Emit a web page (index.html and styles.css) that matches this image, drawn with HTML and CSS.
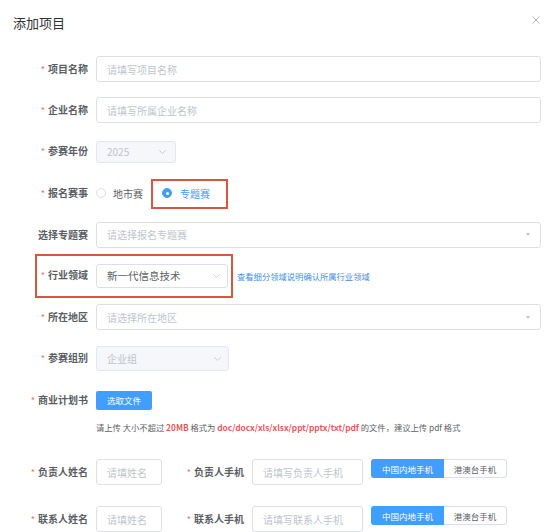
FILE: index.html
```html
<!DOCTYPE html>
<html lang="zh">
<head>
<meta charset="utf-8">
<title>添加项目</title>
<link rel="stylesheet" href="styles.css">
</head>
<body>
<div class="dialog">
  <div class="header">
    <span class="title">添加项目</span>
    <span class="close"><svg width="8" height="8" viewBox="0 0 8 8"><path d="M0.5 0.5L7.5 7.5M7.5 0.5L0.5 7.5" stroke="#a8abb2" stroke-width="0.9" fill="none"/></svg></span>
  </div>
  <div class="form">
    <div class="item">
      <div class="label"><span class="req">*</span>项目名称</div>
      <div class="input full"><span class="ph">请填写项目名称</span></div>
    </div>
    <div class="item">
      <div class="label"><span class="req">*</span>企业名称</div>
      <div class="input full"><span class="ph">请填写所属企业名称</span></div>
    </div>
    <div class="item">
      <div class="label"><span class="req">*</span>参赛年份</div>
      <div class="input select disabled year"><span class="ph">2025</span><svg class="chev" width="7" height="4" viewBox="0 0 7 4"><path d="M0.3 0.3L3.5 3.5L6.7 0.3" stroke="#c0c4cc" stroke-width="0.8" fill="none"/></svg></div>
    </div>
    <div class="item rel">
      <div class="label"><span class="req">*</span>报名赛事</div>
      <div class="radios">
        <span class="radio"><span class="dot"></span><span class="rtext">地市赛</span></span>
        <span class="radio checked"><span class="dot"></span><span class="rtext">专题赛</span></span>
      </div>
      <div class="mark mark-radio"></div>
    </div>
    <div class="item">
      <div class="label">选择专题赛</div>
      <div class="input select full"><span class="ph">请选择报名专题赛</span><span class="tri"></span></div>
    </div>
    <div class="item rel">
      <div class="label"><span class="req">*</span>行业领域</div>
      <div class="input select industry"><span class="val">新一代信息技术</span><svg class="chev" width="7" height="4" viewBox="0 0 7 4"><path d="M0.3 0.3L3.5 3.5L6.7 0.3" stroke="#c0c4cc" stroke-width="0.8" fill="none"/></svg></div>
      <a class="link">查看细分领域说明确认所属行业领域</a>
      <div class="mark mark-industry"></div>
    </div>
    <div class="item">
      <div class="label"><span class="req">*</span>所在地区</div>
      <div class="input select full"><span class="ph">请选择所在地区</span><span class="tri"></span></div>
    </div>
    <div class="item">
      <div class="label"><span class="req">*</span>参赛组别</div>
      <div class="input select disabled group"><span class="ph">企业组</span><svg class="chev" width="7" height="4" viewBox="0 0 7 4"><path d="M0.3 0.3L3.5 3.5L6.7 0.3" stroke="#c0c4cc" stroke-width="0.8" fill="none"/></svg></div>
    </div>
    <div class="item upload">
      <div class="label"><span class="req">*</span>商业计划书</div>
      <span class="btn-primary">选取文件</span>
    </div>
    <div class="hint">请上传 大小不超过 <b>20MB</b> 格式为 <b>doc/docx/xls/xlsx/ppt/pptx/txt/pdf</b> 的文件，建议上传 pdf 格式</div>
    <div class="item person">
      <div class="label"><span class="req">*</span>负责人姓名</div>
      <div class="input name"><span class="ph">请填姓名</span></div>
      <div class="label label2"><span class="req">*</span>负责人手机</div>
      <div class="input phone"><span class="ph">请填写负责人手机</span></div>
      <div class="seg"><span class="seg-on">中国内地手机</span><span class="seg-off">港澳台手机</span></div>
    </div>
    <div class="item person">
      <div class="label"><span class="req">*</span>联系人姓名</div>
      <div class="input name"><span class="ph">请填姓名</span></div>
      <div class="label label2"><span class="req">*</span>联系人手机</div>
      <div class="input phone"><span class="ph">请填写联系人手机</span></div>
      <div class="seg"><span class="seg-on">中国内地手机</span><span class="seg-off">港澳台手机</span></div>
    </div>
  </div>
</div>
</body>
</html>
```
FILE: styles.css
```css
* { box-sizing: border-box; }
html, body { margin: 0; padding: 0; background: #fff; }
body {
  font-family: "Noto Sans CJK SC", "Noto Sans", "Liberation Sans", sans-serif;
  color: #606266;
  width: 553px;
  height: 532px;
  overflow: hidden;
}
.dialog { width: 553px; }
.header {
  height: 44px;
  display: flex;
  align-items: center;
  justify-content: space-between;
  padding: 0 13px 0 13px;
}
.title { font-size: 13px; color: #303133; line-height: 1; }
.close { display: flex; width: 8px; height: 8px; margin-top: -4px; }
.form { padding-top: 12px; padding-right: 12px; }
.item {
  display: flex;
  align-items: center;
  height: 26px;
  margin-bottom: 15.4px;
}
.rel { position: relative; }
.label {
  width: 96px;
  flex: none;
  padding-right: 8px;
  text-align: right;
  font-size: 10px;
  font-weight: 700;
  color: #5a5d63;
  line-height: 26px;
  white-space: nowrap;
}
.req { color: #f56c6c; font-weight: 400; margin-right: 3px; font-size: 9px; }
.input {
  height: 26px;
  border: 1px solid #dcdfe6;
  border-radius: 3px;
  display: flex;
  align-items: center;
  padding: 0 10px 0 10px;
  font-size: 10px;
  background: #fff;
}
.full { flex: 1; }
.ph { color: #c0c4cc; }
.val { color: #606266; font-size: 10.5px; }
.select { justify-content: space-between; }
.disabled { background: #f5f7fa; border-color: #e4e7ed; }
.year { width: 80px; height: 22px; padding-right: 9px; }
.group { width: 133px; height: 25px; padding-right: 7px; }
.industry { width: 132px; height: 24px; padding-right: 7px; }
.chev { display: block; }
.tri {
  width: 0; height: 0;
  border-left: 2.5px solid transparent;
  border-right: 2.5px solid transparent;
  border-top: 3px solid #c0c4cc;
}
.link {
  margin-left: 9px;
  font-size: 8.3px;
  color: #3f8fe0;
  white-space: nowrap;
}
.radios { display: flex; align-items: center; }
.radio { display: flex; align-items: center; font-size: 10px; }
.radio .dot {
  width: 10px; height: 10px;
  border: 1px solid #dcdfe6;
  border-radius: 50%;
  margin-right: 7px;
  background: #fff;
  flex: none;
}
.radio .rtext { width: 30px; }
.radio.checked { margin-left: 19px; }
.radio.checked .dot {
  background: #409eff;
  border-color: #409eff;
  position: relative;
  margin-right: 8px;
}
.radio.checked .dot::after {
  content: "";
  position: absolute;
  left: 2.5px; top: 2.5px;
  width: 3px; height: 3px;
  border-radius: 50%;
  background: #fff;
}
.radio.checked .rtext { color: #409eff; }
.mark { position: absolute; border: 2px solid #d9553f; }
.mark-radio { left: 151px; top: -1px; width: 77px; height: 30px; }
.mark-industry { left: 35px; top: -9px; width: 198px; height: 44px; }
.upload { margin-bottom: 9px; }
.btn-primary {
  width: 56px;
  height: 19px;
  background: #409eff;
  color: #fff;
  border-radius: 2px;
  font-size: 8.5px;
  display: flex;
  align-items: center;
  justify-content: center;
}
.hint {
  margin-left: 96px;
  height: 11px;
  line-height: 11px;
  font-size: 8.3px;
  color: #606266;
  white-space: nowrap;
  margin-bottom: 26px;
}
.hint b { color: #e05b5b; font-weight: 700; }
.person { align-items: flex-start; margin-bottom: 21px; }
.name { width: 66px; }
.label2 { width: 90px; font-size: 10px; }
.phone { width: 111px; }
.seg { display: flex; margin-left: 8px; height: 19px; font-size: 8.5px; }
.seg-on {
  width: 73px;
  background: #409eff;
  color: #fff;
  border-radius: 3px 0 0 3px;
  display: flex; align-items: center; justify-content: center;
}
.seg-off {
  width: 63px;
  border: 1px solid #dcdfe6;
  border-left: none;
  border-radius: 0 3px 3px 0;
  color: #606266;
  display: flex; align-items: center; justify-content: center;
}
```
